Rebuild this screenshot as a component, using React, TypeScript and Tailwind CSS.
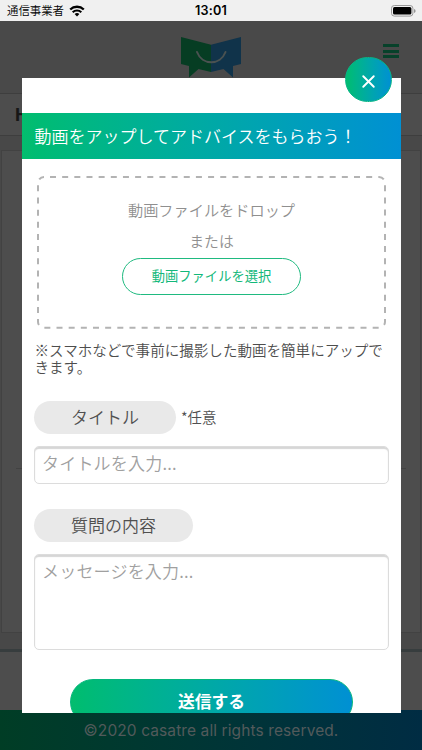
import { X } from "lucide-react";

function StatusBar() {
  return (
    <div className="relative flex h-[21px] shrink-0 items-center justify-between bg-[#f0f0f0] pr-[6px] pl-[7px] text-black">
      <div className="flex items-center gap-[5px]">
        <span className="text-[11.4px] leading-[21px] whitespace-nowrap">通信事業者</span>
        <svg width="16" height="12" viewBox="0 0 16 12" fill="none">
          <path d="M1.2 4.5a9.8 9.8 0 0 1 13.6 0" stroke="#000" strokeWidth="2.3" />
          <path d="M3.7 7.2a6.2 6.2 0 0 1 8.6 0" stroke="#000" strokeWidth="2.1" />
          <path d="M8 11.6 5.6 9.1a3.5 3.5 0 0 1 4.8 0Z" fill="#000" />
        </svg>
      </div>
      <span className="absolute inset-x-0 text-center font-['Inter'] text-[12.6px] leading-[21px] font-semibold tracking-[0.2px]">
        13:01
      </span>
      <svg width="25" height="12" viewBox="0 0 25 12">
        <rect x="0.5" y="0.5" width="21.4" height="10.6" rx="2.8" fill="none" stroke="#999" />
        <rect x="2" y="2" width="18.4" height="7.6" rx="1.5" fill="#000" />
        <path d="M23.1 4v4a2.1 2.1 0 0 0 0-4Z" fill="#888" />
      </svg>
    </div>
  );
}

function Logo() {
  return (
    <svg width="62" height="42" viewBox="0 0 62 42" className="mt-[15px]">
      <path d="M1 1 31 8.7V36L18.5 33 9 41.5V30L1 28Z" fill="#063d23" />
      <path d="M61 1 31 8.7V36L43.5 33 53 41.5V30L61 28Z" fill="#10334a" />
      <path d="M17 16c5 13.5 23.5 13.5 28.5 0" fill="none" stroke="#4b5251" strokeWidth="2" strokeLinecap="round" />
    </svg>
  );
}

function Page() {
  return (
    <div className="flex h-full flex-col bg-[#484848]">
      <StatusBar />
      <header className="relative flex h-[72px] shrink-0 justify-center bg-[#494949]">
        <Logo />
        <div className="absolute top-[23px] right-[23px] flex flex-col gap-[2.5px]">
          <span className="h-[3px] w-4 bg-[#07412a]" />
          <span className="h-[3px] w-4 bg-[#07412a]" />
          <span className="h-[3px] w-4 bg-[#07412a]" />
        </div>
      </header>
      <div className="h-[43px] shrink-0 border-y border-[#3e3e3e] bg-[#4d4d4d] pl-[15px] font-['Inter'] text-[18px] leading-[41px] font-bold text-[#171717]">
        H
      </div>
      <div className="mx-px mt-[14px] h-[483px] shrink-0 border border-[#424242] bg-[#4d4d4d] px-[14px]">
        <div className="h-[318px] border-b border-[#424242]" />
      </div>
      <div className="mt-[16px] h-[3px] shrink-0 bg-[#373d3e]" />
      <div className="h-[58px] shrink-0 bg-[#4d4d4d]" />
      <footer className="h-10 shrink-0 bg-gradient-to-r from-[#003d25] to-[#002c43] text-center font-['Inter'] text-[15.5px] leading-[41px] font-normal tracking-[0.1px] text-[#525a5b]">
        ©2020 casatre all rights reserved.
      </footer>
    </div>
  );
}

function DropZone() {
  return (
    <div className="relative mt-4 ml-[14px] flex h-[154px] w-[351px] shrink-0 flex-col items-center pt-[22px] text-[#8f8f8f]">
      <svg className="absolute inset-0" width="351" height="154" fill="none">
        <rect
          x="2"
          y="2"
          width="347"
          height="150.7"
          rx="6"
          stroke="#b3b3b3"
          strokeWidth="2"
          strokeDasharray="6 6.16"
          strokeDashoffset="-6"
        />
      </svg>
      <p className="text-[15.2px] leading-[24px]">動画ファイルをドロップ</p>
      <p className="mt-[8px] text-[14.8px] leading-[24px]">または</p>
      <button className="mt-[5px] h-[37px] w-[179px] rounded-full border border-[#1fba80] text-[13.3px] font-normal text-[#12b87a]">
        動画ファイルを選択
      </button>
    </div>
  );
}

function Label({ text, width }: { text: string; width: string }) {
  return (
    <span className={`${width} h-[33px] rounded-full bg-[#e9e9e9] text-center text-[17px] leading-[32px] text-[#505050]`}>
      {text}
    </span>
  );
}

function UploadModal() {
  return (
    <div className="absolute top-[78px] left-[22px] h-[635px] w-[379px]">
      <div className="flex h-full flex-col overflow-hidden bg-white pt-[35px]">
        <h2 className="h-[45.5px] shrink-0 bg-gradient-to-r from-[#04bd6e] to-[#0090d3] pl-[12.5px] text-[17px] leading-[45px] font-[350] whitespace-nowrap text-white">
          動画をアップしてアドバイスをもらおう！
        </h2>
        <DropZone />
        <p className="mt-[12px] ml-[12.5px] text-[14.55px] leading-[17.5px] whitespace-nowrap text-[#4d4d4d]">
          ※スマホなどで事前に撮影した動画を簡単にアップで
          <br />
          きます。
        </p>
        <div className="mt-[25px] ml-[12px] flex items-center gap-[5px] text-[#505050]">
          <Label text="タイトル" width="w-[142px]" />
          <span className="text-[14.4px]">*任意</span>
        </div>
        <input
          className="mt-[12px] ml-[12px] h-[38px] w-[355px] shrink-0 rounded-[5px] border border-[#dcdcdc] px-[7px] pb-[4px] text-[17px] tracking-[0.2px] shadow-[inset_0_2px_1px_#d6d6d6] outline-none placeholder:text-[#a0a0a0]"
          placeholder="タイトルを入力..."
        />
        <div className="mt-[25px] ml-[12px] flex">
          <Label text="質問の内容" width="w-[159px]" />
        </div>
        <textarea
          className="mt-[12px] ml-[12px] h-[96px] w-[355px] shrink-0 resize-none rounded-[5px] border border-[#dcdcdc] px-[7px] pt-[4px] text-[17px] leading-[24px] tracking-[0.2px] shadow-[inset_0_2px_1px_#d6d6d6] outline-none placeholder:text-[#a0a0a0]"
          placeholder="メッセージを入力..."
        />
        <button className="mt-[29px] ml-[48px] h-[46px] w-[283px] shrink-0 rounded-full border border-[#05b67c] bg-gradient-to-r from-[#04bd6e] to-[#0090d3] text-[16.8px] font-bold text-white">
          送信する
        </button>
      </div>
      <button
        aria-label="close"
        className="absolute top-[-21px] right-[9px] flex h-[45px] w-[47px] items-center justify-center rounded-full border border-[#08b487] bg-gradient-to-r from-[#04bd6e] to-[#0090d3] pt-[4px] text-white"
      >
        <X size={21} strokeWidth={2.2} />
      </button>
    </div>
  );
}

export default function App() {
  return (
    <div className="relative h-[750px] w-[422px] overflow-hidden font-['Noto_Sans_CJK_JP',sans-serif] font-[350]">
      <Page />
      <UploadModal />
    </div>
  );
}
